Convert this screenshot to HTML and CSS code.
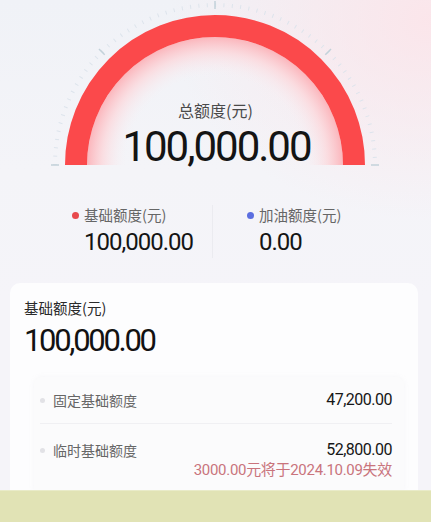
FILE: index.html
```html
<!DOCTYPE html>
<html lang="zh-CN">
<head>
<meta charset="utf-8">
<title>额度</title>
<link rel="stylesheet" href="styles.css">
</head>
<body>
<div class="page">
  <section class="gauge">
    <svg class="gauge-art" width="431" height="168" viewBox="0 0 431 168" aria-hidden="true">
      <defs>
        <radialGradient id="glow" cx="215" cy="165" r="128" gradientUnits="userSpaceOnUse">
          <stop offset="0" stop-color="#f6f6fa" stop-opacity="0"/>
          <stop offset="0.7" stop-color="#f8eef2" stop-opacity="0"/>
          <stop offset="0.88" stop-color="#fcd6da" stop-opacity="0.75"/>
          <stop offset="1" stop-color="#fbb6bc" stop-opacity="1"/>
        </radialGradient>
      </defs>
      <path d="M 55 165 A 160 160 0 0 1 375 165" fill="none" stroke="#dde4ec" stroke-width="4" stroke-dasharray="1 7.3776"/>
      <g stroke="#c3d2da" stroke-width="1.5">
        <line x1="51" y1="165" x2="59" y2="165"/>
        <line x1="99" y1="49" x2="104.7" y2="54.7"/>
        <line x1="215" y1="1" x2="215" y2="9"/>
        <line x1="331" y1="49" x2="325.3" y2="54.7"/>
        <line x1="371" y1="165" x2="379" y2="165"/>
      </g>
      <path d="M 87 165 A 128 128 0 0 1 343 165 Z" fill="url(#glow)"/>
      <path d="M 76 165 A 139 139 0 0 1 354 165" fill="none" stroke="#fb494b" stroke-width="22"/>
    </svg>
    <div class="gauge-text">
      <div class="gauge-label">总额度(元)</div>
      <div class="gauge-value">100,000.00</div>
    </div>
  </section>

  <section class="stats">
    <div class="stat stat-left">
      <div class="stat-label"><span class="dot dot-red"></span>基础额度(元)</div>
      <div class="stat-value">100,000.00</div>
    </div>
    <div class="stat-divider"></div>
    <div class="stat stat-right">
      <div class="stat-label"><span class="dot dot-blue"></span>加油额度(元)</div>
      <div class="stat-value">0.00</div>
    </div>
  </section>

  <section class="card">
    <div class="card-label">基础额度(元)</div>
    <div class="card-value">100,000.00</div>
    <div class="detail">
      <div class="row row-first">
        <div class="row-main">
          <span class="row-name"><span class="dot dot-gray"></span>固定基础额度</span>
          <span class="row-amount">47,200.00</span>
        </div>
      </div>
      <div class="row row-second">
        <div class="row-main">
          <span class="row-name"><span class="dot dot-gray"></span>临时基础额度</span>
          <span class="row-amount">52,800.00</span>
        </div>
        <div class="row-note">3000.00元将于2024.10.09失效</div>
      </div>
    </div>
  </section>

  <div class="band"></div>
</div>
</body>
</html>
```

FILE: styles.css
```css
html, body {
  margin: 0;
  padding: 0;
}
body {
  width: 431px;
  height: 522px;
  overflow: hidden;
  background: #f5f4f9;
  font-family: Roboto, "Noto Sans CJK SC", sans-serif;
  color: #111;
}
.page {
  width: 431px;
  height: 522px;
  overflow: hidden;
  display: flex;
  flex-direction: column;
  background:
    radial-gradient(ellipse 260px 200px at 430px 20px, rgba(252, 228, 233, 0.9), rgba(252, 228, 233, 0) 100%),
    linear-gradient(180deg, #f0f2f7 0px, #f4f4f8 170px, #f5f4f9 300px);
}

/* gauge */
.gauge {
  display: grid;
  height: 168px;
  flex: none;
}
.gauge-art {
  grid-area: 1 / 1;
  display: block;
}
.gauge-text {
  grid-area: 1 / 1;
  padding-top: 98px;
  text-align: center;
}
.gauge-label {
  font-family: "Noto Sans CJK SC", sans-serif;
  font-size: 16px;
  line-height: 24px;
  color: #4a4a4a;
}
.gauge-value {
  margin-top: 2px;
  font-size: 42px;
  line-height: 46px;
  letter-spacing: -2px;
  color: #141414;
  padding-left: 2px;
}

/* stats */
.stats {
  display: flex;
  padding-top: 37px;
  flex: none;
  box-sizing: border-box;
  height: 115px;
}
.stat-left {
  width: 212px;
  padding-left: 72px;
  box-sizing: border-box;
}
.stat-right {
  padding-left: 34px;
}
.stat-divider {
  width: 1px;
  height: 53px;
  background: #ebebf0;
}
.stat-label {
  display: flex;
  align-items: center;
  font-family: "Noto Sans CJK SC", sans-serif;
  font-size: 14.5px;
  line-height: 20px;
  color: #666;
}
.stat-value {
  margin-top: 2px;
  padding-left: 12px;
  font-size: 24px;
  line-height: 30px;
  letter-spacing: -1px;
  color: #141414;
}
.dot {
  display: inline-block;
  width: 7px;
  height: 7px;
  border-radius: 50%;
  margin-right: 5px;
  flex: none;
}
.dot-red { background: #e8494d; }
.dot-blue { background: #5b6ee0; }
.dot-gray {
  width: 5px;
  height: 5px;
  background: #e2e2e6;
  margin-right: 8px;
}

/* card */
.card {
  flex: none;
  margin: 0 13px 0 10px;
  padding: 14px 14px 0 14px;
  background: #fdfdfe;
  border-radius: 10px 10px 0 0;
}
.card-label {
  font-family: "Noto Sans CJK SC", sans-serif;
  font-size: 14.5px;
  line-height: 22px;
  color: #2a2a2a;
}
.card-value {
  margin-top: 3px;
  font-size: 31px;
  line-height: 38px;
  letter-spacing: -2.3px;
  color: #121212;
}
.detail {
  margin: 17px 0 0 10px;
  padding: 0 12px 11px 6px;
  background: #fbfbfc;
  border-radius: 8px 8px 0 0;
  box-shadow: 0 0 4px rgba(225, 225, 232, 0.25);
}
.row-first {
  padding: 12px 0 12px;
  border-bottom: 1px solid #f0f0f3;
}
.row-second {
  padding-top: 15px;
}
.row-main {
  display: flex;
  justify-content: space-between;
  align-items: center;
  line-height: 22px;
}
.row-name {
  display: flex;
  align-items: center;
  font-family: "Noto Sans CJK SC", sans-serif;
  font-size: 14px;
  color: #666;
}
.row-amount {
  font-size: 16px;
  letter-spacing: -0.5px;
  color: #161616;
}
.row-note {
  text-align: right;
  font-family: Roboto, "Noto Sans CJK SC", sans-serif;
  font-size: 15px;
  letter-spacing: -0.3px;
  line-height: 18px;
  color: #c9747c;
}

/* bottom band */
.band {
  flex: 1;
  background: #e1e3b5;
  border-top: 1px solid #e9ebc9;
}
```
